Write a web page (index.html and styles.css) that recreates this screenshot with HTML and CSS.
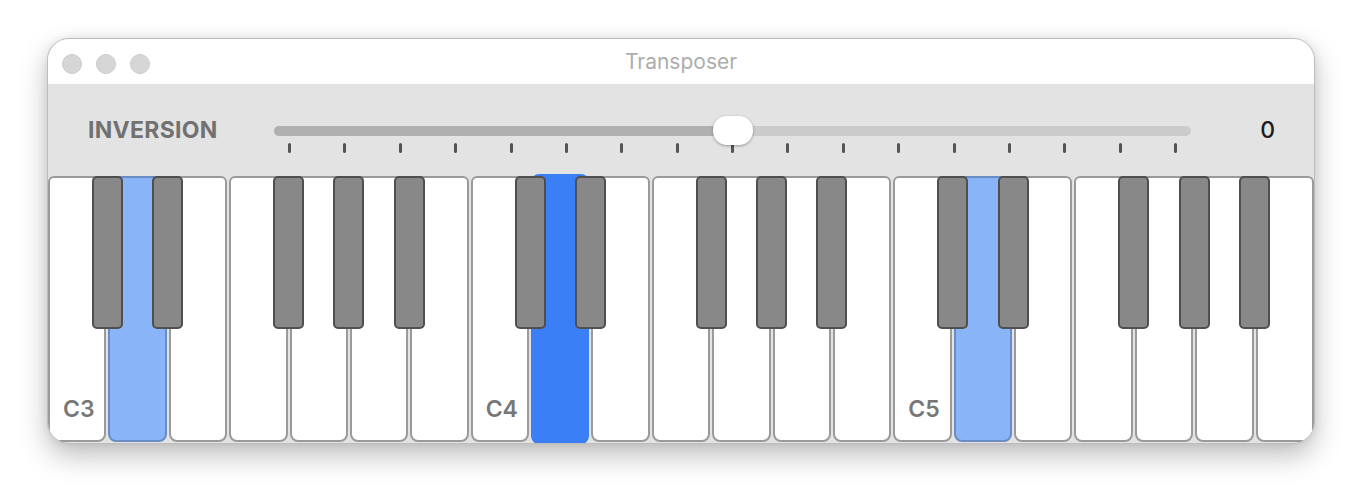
FILE: index.html
```html
<!DOCTYPE html>
<html lang="en">
<head>
  <meta charset="UTF-8">
  <title>Transposer</title>
  <link rel="stylesheet" href="styles.css">
</head>
<body>

  <div class="window">
    <div class="titlebar">
      <div class="lights">
        <span class="light"></span>
        <span class="light"></span>
        <span class="light"></span>
      </div>
      <div class="title">Transposer</div>
    </div>

    <div class="toolbar">
      <div class="label">INVERSION</div>
      <div class="slider">
        <div class="track">
          <div class="fill"></div>
          <div class="knob"></div>
        </div>
        <div class="ticks">
          <span></span><span></span><span></span><span></span><span></span><span></span>
          <span></span><span></span><span></span><span></span><span></span><span></span>
          <span></span><span></span><span></span><span></span><span></span>
        </div>
      </div>
      <div class="value">0</div>
    </div>

    <div class="keyboard">
      <!-- octave 3 -->
      <div class="white"><div class="black"></div><span class="note">C3</span></div>
      <div class="white soft"><div class="black"></div></div>
      <div class="white"></div>
      <div class="white"><div class="black"></div></div>
      <div class="white"><div class="black"></div></div>
      <div class="white"><div class="black"></div></div>
      <div class="white"></div>
      <!-- octave 4 -->
      <div class="white"><div class="black"></div><span class="note">C4</span></div>
      <div class="white pressed"><div class="black"></div></div>
      <div class="white"></div>
      <div class="white"><div class="black"></div></div>
      <div class="white"><div class="black"></div></div>
      <div class="white"><div class="black"></div></div>
      <div class="white"></div>
      <!-- octave 5 -->
      <div class="white"><div class="black"></div><span class="note">C5</span></div>
      <div class="white soft"><div class="black"></div></div>
      <div class="white"></div>
      <div class="white"><div class="black"></div></div>
      <div class="white"><div class="black"></div></div>
      <div class="white"><div class="black"></div></div>
      <div class="white"></div>
    </div>
  </div>

</body>
</html>
```

FILE: styles.css
```css
html, body {
  height: 100%;
}

body {
  box-sizing: border-box;
  margin: 0;
  padding: 38px 0 0 47px;
  background-color: #ffffff;
  font-family: Inter, "Noto Sans", sans-serif;
}

.window {
  box-sizing: border-box;
  width: 1268px;
  height: 406px;
  border: 1px solid #bdbdbd;
  border-radius: 22px;
  overflow: hidden;
  background-color: #e3e3e3;
  box-shadow: 0 12px 28px rgba(0, 0, 0, 0.25), 0 0 10px rgba(0, 0, 0, 0.08);
}

/* title bar */
.titlebar {
  position: relative;
  height: 45px;
  background-color: #ffffff;
  display: flex;
  align-items: center;
  justify-content: center;
}

.lights {
  position: absolute;
  left: 14px;
  top: 15px;
  display: flex;
  gap: 14px;
}

.light {
  box-sizing: border-box;
  width: 20px;
  height: 20px;
  border-radius: 50%;
  background-color: #d6d6d6;
  border: 1px solid #cbcbcb;
}

.title {
  font-size: 21px;
  color: #adadad;
}

/* toolbar with slider */
.toolbar {
  height: 92px;
  padding: 0 39px 0 40px;
  display: flex;
  align-items: center;
}

.label {
  width: 186px;
  font-size: 23px;
  font-weight: 700;
  color: #717171;
  letter-spacing: 0.3px;
}

.slider {
  flex: 1;
  align-self: flex-start;
  margin-top: 42px;
}

.track {
  position: relative;
  height: 10px;
  border-radius: 5px;
  background-color: #cbcbcb;
}

.fill {
  width: 50%;
  height: 100%;
  border-radius: 5px 0 0 5px;
  background-color: #b0b0b0;
}

.knob {
  position: absolute;
  left: calc(50% - 20px);
  top: -10px;
  width: 40px;
  height: 29px;
  border-radius: 14px;
  background-color: #ffffff;
  box-shadow: 0 1px 3px rgba(0, 0, 0, 0.35);
  z-index: 2;
}

.ticks {
  display: flex;
  justify-content: space-between;
  padding: 0 14px;
  margin-top: 7px;
}

.ticks span {
  width: 3px;
  height: 10px;
  border-radius: 2px;
  background-color: #555555;
}

.value {
  width: 84px;
  text-align: right;
  font-size: 23px;
  font-weight: 500;
  color: #1c1c1c;
}

/* piano */
.keyboard {
  display: flex;
  gap: 2px;
  height: 266px;
  padding-bottom: 1px;
}

.white {
  position: relative;
  flex: 1;
  box-sizing: border-box;
  background-color: #ffffff;
  border: 2px solid #9a9a9a;
  border-radius: 6px 6px 8px 8px;
}

.white.soft {
  background-color: #8ab4f8;
  border-color: #6a8cc4;
}

.white.pressed {
  background-color: #3b7ff6;
  border-color: #3b7ff6;
  margin: -2px 0 -2px;
  border-radius: 8px;
}

.black {
  position: absolute;
  top: -2px;
  right: -18.5px;
  box-sizing: border-box;
  width: 31px;
  height: 153px;
  background-color: #888888;
  border: 2px solid #4f4f4f;
  border-radius: 5px;
  z-index: 1;
}

.pressed .black {
  top: 0;
}

.note {
  position: absolute;
  left: 13px;
  bottom: 17px;
  font-size: 23px;
  font-weight: 600;
  color: #777777;
}
```
